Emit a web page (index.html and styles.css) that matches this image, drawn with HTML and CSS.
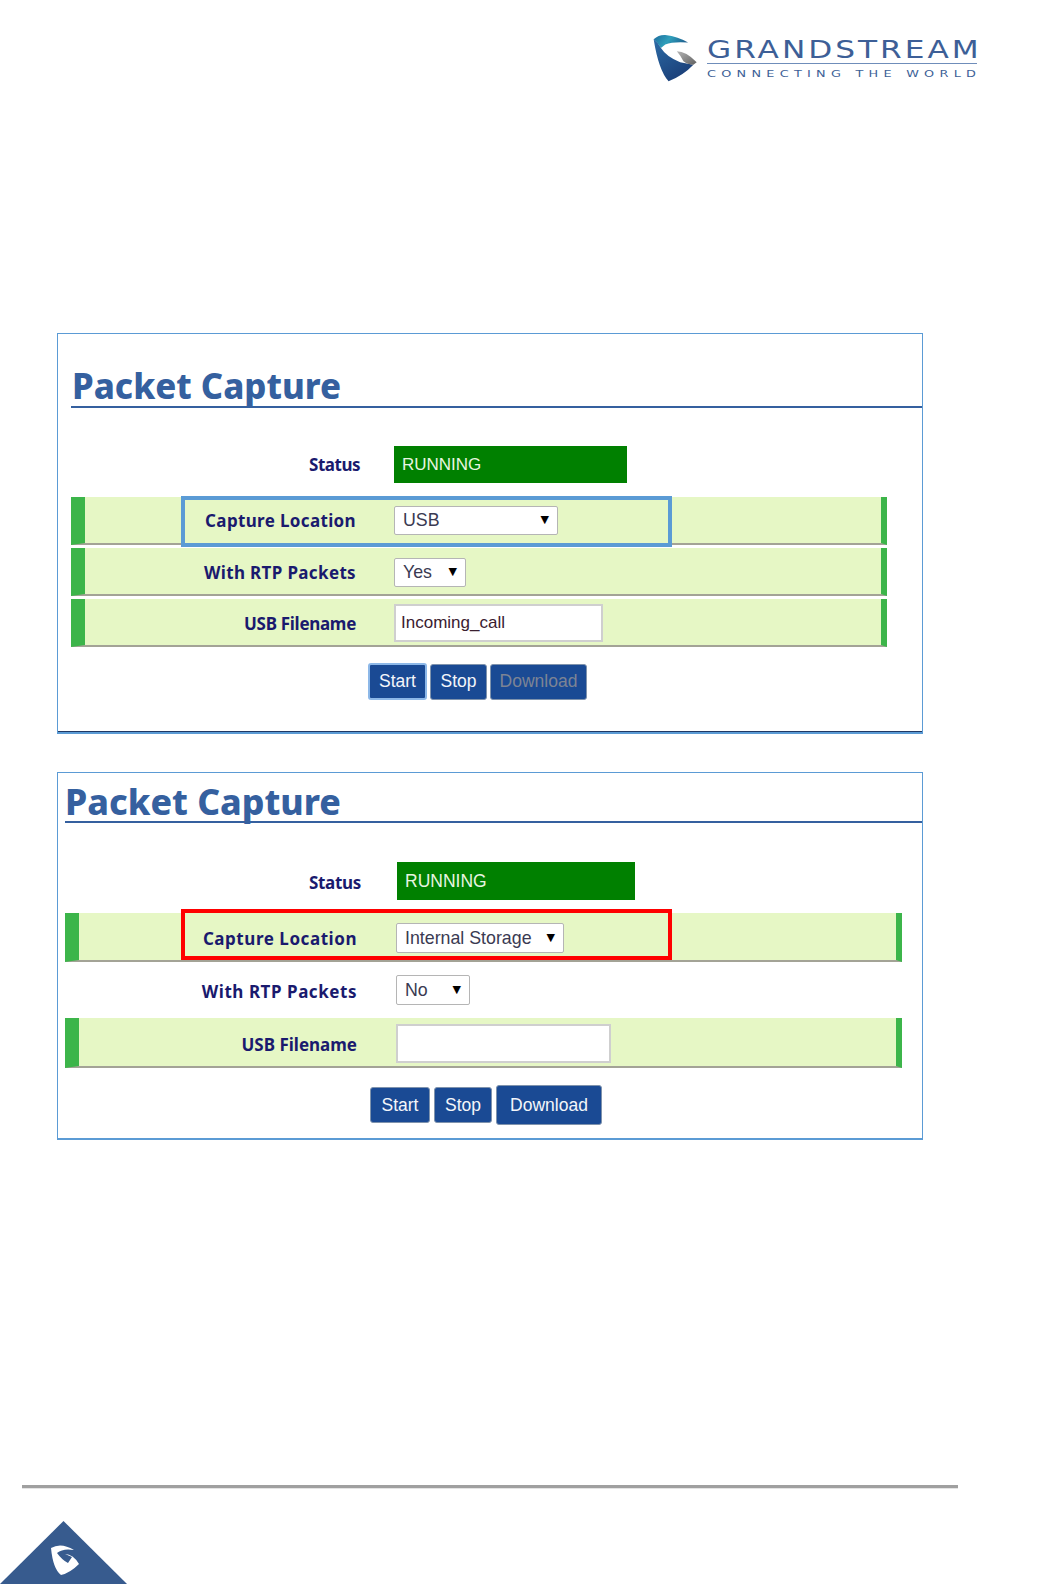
FILE: index.html
```html
<!DOCTYPE html>
<html lang="en">
<head>
  <meta charset="UTF-8">
  <title>Packet Capture</title>
  <link rel="stylesheet" href="styles.css">
</head>
<body>
  <header class="top">
    <div class="brand">
      <svg class="brand-mark" viewBox="68 40 136 145">
        <defs>
          <linearGradient id="teal" x1="0" y1="0" x2="1" y2="0.3">
            <stop offset="0" stop-color="#1c6a9c"/>
            <stop offset="0.5" stop-color="#2f9fbb"/>
            <stop offset="1" stop-color="#1d5f8f"/>
          </linearGradient>
          <linearGradient id="navy" x1="0" y1="0" x2="0.6" y2="1">
            <stop offset="0" stop-color="#2c6ba6"/>
            <stop offset="1" stop-color="#1b3f78"/>
          </linearGradient>
          <linearGradient id="grey" x1="0" y1="0" x2="1" y2="1">
            <stop offset="0" stop-color="#b5b5b5"/>
            <stop offset="1" stop-color="#5f5f5f"/>
          </linearGradient>
        </defs>
        <path fill="url(#teal)" d="M70 56 Q85 42 105 43 Q145 48 174 66 Q130 62 105 72 L92 82 Q80 64 70 56Z"/>
        <path fill="url(#navy)" d="M70 56 Q86 68 92 82 Q108 108 150 125 L190 133 Q160 165 115 183 Q85 150 70 56Z"/>
        <path fill="url(#grey)" d="M140 92 Q168 92 200 125 L190 133 Q172 132 160 122 Q152 106 140 92Z"/>
      </svg>
      <div class="brand-text">
        <div class="brand-name"><span>GRANDSTREAM</span></div>
        <div class="brand-tag"><span>CONNECTING THE WORLD</span></div>
      </div>
    </div>
  </header>

  <section class="panel panel-usb">
    <h1 class="title">Packet Capture</h1>
    <div class="row row-plain row-status">
      <label class="lbl-status">Status</label>
      <div class="status">RUNNING</div>
    </div>
    <div class="row">
      <div class="mark mark-blue"></div>
      <label class="lbl-wide">Capture Location</label>
      <div class="select sel-usb"><select><option>USB</option></select></div>
    </div>
    <div class="row">
      <label class="lbl-wide">With RTP Packets</label>
      <div class="select sel-yes"><select><option>Yes</option></select></div>
    </div>
    <div class="row">
      <label class="lbl-file">USB Filename</label>
      <input class="field" type="text" value="Incoming_call">
    </div>
    <div class="actions">
      <button class="focused">Start</button>
      <button>Stop</button>
      <button class="disabled">Download</button>
    </div>
  </section>

  <section class="panel panel-internal">
    <h1 class="title">Packet Capture</h1>
    <div class="row row-plain row-status">
      <label class="lbl-status">Status</label>
      <div class="status">RUNNING</div>
    </div>
    <div class="row">
      <div class="mark mark-red"></div>
      <label class="lbl-wide">Capture Location</label>
      <div class="select sel-internal"><select><option>Internal Storage</option></select></div>
    </div>
    <div class="row row-plain">
      <label class="lbl-wide">With RTP Packets</label>
      <div class="select sel-no"><select><option>No</option></select></div>
    </div>
    <div class="row">
      <label>USB Filename</label>
      <input class="field" type="text">
    </div>
    <div class="actions">
      <button>Start</button>
      <button>Stop</button>
      <button class="big">Download</button>
    </div>
  </section>

  <footer class="bottom">
    <div class="rule"></div>
    <svg class="corner" viewBox="0 0 127 63">
      <path fill="#375b8e" d="M63.5 0 L127 63 L0 63Z"/>
      <path fill="#fff" d="M51 27 Q61 21 74 29 Q63 27 57 32 Q62 39 68 42 L72 36 L65 33 Q73 33 79 43 Q70 52 61 54 Q53 48 51 27Z"/>
    </svg>
  </footer>
</body>
</html>
```

FILE: styles.css
```css
html, body {
  margin: 0;
  padding: 0;
}
body {
  width: 1043px;
  height: 1584px;
  overflow: hidden;
  background: white;
  font-family: "Liberation Sans", sans-serif;
}

/* logo */
.top {
  height: 333px;
  box-sizing: border-box;
  padding: 34px 0 0 653px;
}
.brand {
  display: flex;
  gap: 9px;
}
.brand-mark {
  width: 45px;
  height: 48px;
}
.brand-text {
  width: 270px;
  padding-top: 4px;
}
.brand-name, .brand-tag {
  font-family: "DejaVu Sans", sans-serif;
  color: #3d5f97;
  white-space: nowrap;
}
.brand-name span, .brand-tag span {
  display: inline-block;
  transform-origin: left center;
}
.brand-name {
  font-size: 24px;
  line-height: 24px;
  border-bottom: 1px solid #6f8dba;
  padding-bottom: 1px;
}
.brand-name span {
  letter-spacing: 2.3px;
  transform: scaleX(1.3);
}
.brand-tag {
  font-size: 9.5px;
  line-height: 20px;
}
.brand-tag span {
  letter-spacing: 3.9px;
  transform: scaleX(1.35);
}

/* panels */
.panel {
  margin-left: 57px;
  width: 866px;
  box-sizing: border-box;
  border: 1px solid #5b9bd5;
}
.title {
  margin: 0;
  font-family: "Noto Sans", sans-serif;
  font-weight: 800;
  color: #35609f;
  border-bottom: 2px solid #35609f;
  box-sizing: border-box;
}
.row {
  position: relative;
  display: flex;
  align-items: center;
  box-sizing: border-box;
  height: 48px;
  background: #e6f7c5;
  border-left: 14px solid #3cb54a;
  border-right: 6px solid #3cb54a;
  border-bottom: 2px solid #a3a396;
}
.row-plain {
  background: none;
  border-color: transparent;
}
.row label {
  font-family: "Noto Sans", sans-serif;
  font-weight: 700;
  font-size: 17px;
  color: #1a1a6e;
  text-align: right;
  white-space: nowrap;
}
.status {
  box-sizing: border-box;
  display: flex;
  align-items: center;
  padding-left: 8px;
  background: #008000;
  color: #e8f5e0;
}
.select {
  position: relative;
}
.select select {
  appearance: none;
  box-sizing: border-box;
  width: 100%;
  height: 100%;
  padding: 0 0 0 8px;
  background: white;
  border: 1px solid #b5b5b5;
  border-radius: 2px;
  color: #3a3a52;
  font-family: "Liberation Sans", sans-serif;
  font-size: 17.8px;
}
.select::after {
  content: "▼";
  position: absolute;
  right: 9px;
  top: 50%;
  transform: translateY(-55%);
  font-family: "DejaVu Sans", sans-serif;
  font-size: 11px;
  color: black;
}
.field {
  box-sizing: border-box;
  background: white;
  border: 2px solid #cfcfcf;
  padding: 0 0 0 5px;
  color: #3a2030;
  font-family: "Liberation Sans", sans-serif;
  font-size: 17px;
}
.mark {
  position: absolute;
  left: 96px;
  box-sizing: border-box;
  width: 491px;
  border-width: 4px;
  border-style: solid;
}
.mark-blue {
  top: -1px;
  height: 51px;
  border-color: #5b9bd5;
}
.mark-red {
  top: -4px;
  height: 51px;
  left: 102px;
  border-color: #ff0000;
}
.actions {
  display: flex;
  align-items: center;
}
button {
  box-sizing: border-box;
  background: #1a4a94;
  color: #f4f6fa;
  border: 1px solid #7f93ad;
  border-radius: 3px;
  padding: 0;
  font-family: "Liberation Sans", sans-serif;
  font-size: 17.5px;
}
button.disabled {
  color: #7d8494;
}
button.focused {
  border: 2px solid #8db8e8;
}

/* top panel */
.panel-usb {
  border-bottom: 2px solid #5b9bd5;
  box-shadow: inset 0 -1px 0 #1f3864;
  padding: 0 0 32px 13px;
}
.panel-usb .title {
  height: 74px;
  padding: 28px 0 0 1px;
  font-size: 34.7px;
  line-height: 48px;
}
.panel-usb .row {
  width: 816px;
  margin-bottom: 3px;
}
.panel-usb .row:nth-of-type(3),
.panel-usb .row:nth-of-type(4) {
  padding-top: 2px;
}
.panel-usb .row-status {
  height: 37px;
  margin: 39px 0 13px;
}
.panel-usb .row label {
  width: 271px;
  margin-right: 38px;
}
.panel-usb .row label.lbl-wide { letter-spacing: .35px; }
.panel-usb .row label.lbl-file { letter-spacing: -.3px; }
.panel-usb .row label.lbl-status {
  width: 275px;
  margin-right: 34px;
  letter-spacing: -.5px;
}
.panel-usb .status {
  width: 233px;
  height: 37px;
  font-size: 17px;
}
.panel-usb .sel-usb { width: 164px; height: 29px; }
.panel-usb .sel-yes { width: 72px; height: 29px; }
.panel-usb .field { width: 209px; height: 38px; }
.panel-usb .actions {
  padding-left: 297px;
  margin-top: 16px;
  gap: 3px;
}
.panel-usb button { height: 36px; }
.panel-usb button:nth-child(1) { width: 59px; height: 37px; }
.panel-usb button:nth-child(2) { width: 57px; }
.panel-usb button:nth-child(3) { width: 97px; }

/* bottom panel */
.panel-internal {
  margin-top: 38px;
  border-bottom-width: 2px;
  padding: 0 0 13px 7px;
}
.panel-internal .title {
  height: 50px;
  padding-top: 4px;
  font-size: 35.6px;
  line-height: 48px;
}
.panel-internal .row {
  width: 837px;
  margin-bottom: 4px;
  padding-top: 2px;
}
.panel-internal .row-status {
  height: 38px;
  margin: 40px 0 12px;
  padding-top: 0;
}
.panel-internal .row label {
  width: 278px;
  margin-right: 39px;
  padding-top: 2px;
}
.panel-internal .row label.lbl-wide { letter-spacing: .55px; }
.panel-internal .row label.lbl-status {
  width: 282px;
  margin-right: 36px;
  letter-spacing: -.3px;
}
.panel-internal .status {
  width: 238px;
  height: 38px;
  font-size: 17.5px;
}
.panel-internal .sel-internal { width: 168px; height: 30px; }
.panel-internal .sel-no { width: 74px; height: 30px; }
.panel-internal .field { width: 215px; height: 39px; }
.panel-internal .row:nth-of-type(2) { height: 49px; }
.panel-internal .row:nth-of-type(4) { height: 50px; }
.panel-internal .mark-red { top: -4px; }
.panel-internal .actions {
  padding-left: 305px;
  margin-top: 17px;
  gap: 4px;
}
.panel-internal button { width: 60px; height: 36px; }
.panel-internal button:nth-child(2) { width: 58px; }
.panel-internal button.big { width: 106px; height: 40px; }

/* footer */
.bottom {
  padding: 345px 0 0 22px;
}
.rule {
  width: 936px;
  height: 3px;
  background: #a0a0a0;
  box-shadow: 0 1px 0 #e4e4e4;
}
.corner {
  display: block;
  width: 127px;
  height: 63px;
  margin: 33px 0 0 -22px;
}
```
